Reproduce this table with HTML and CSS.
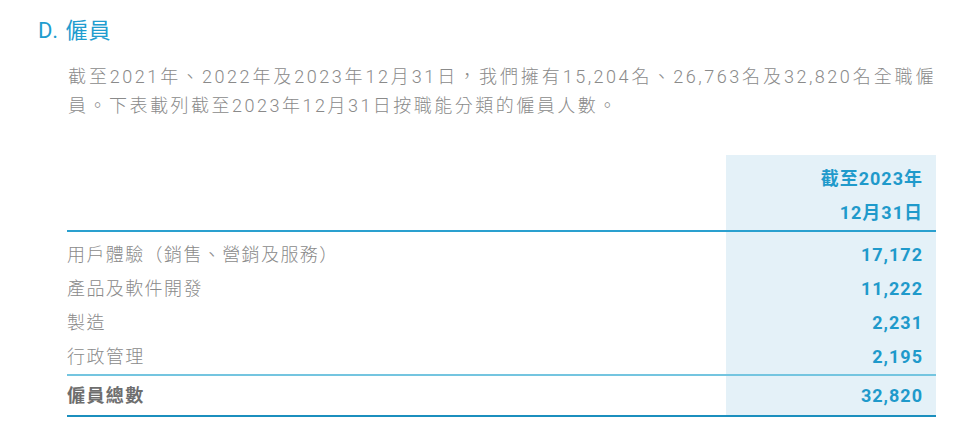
FILE: index.html
```html
<!DOCTYPE html>
<html lang="zh-Hant">
<head>
    <meta charset="UTF-8">
    <title>僱員</title>
    <link rel="stylesheet" href="styles.css">
</head>
<body>
    <h2 class="section-title">D. 僱員</h2>

    <p class="intro">截至2021年、2022年及2023年12月31日，我們擁有15,204名、26,763名及32,820名全職僱員。下表載列截至2023年12月31日按職能分類的僱員人數。</p>

    <table class="staff-table">
        <thead>
            <tr>
                <th class="label-col"></th>
                <th class="value-col">截至2023年<br>12月31日</th>
            </tr>
        </thead>
        <tbody>
            <tr class="first">
                <td>用戶體驗（銷售、營銷及服務）</td>
                <td class="value-col">17,172</td>
            </tr>
            <tr>
                <td>產品及軟件開發</td>
                <td class="value-col">11,222</td>
            </tr>
            <tr>
                <td>製造</td>
                <td class="value-col">2,231</td>
            </tr>
            <tr class="last">
                <td>行政管理</td>
                <td class="value-col">2,195</td>
            </tr>
        </tbody>
        <tfoot>
            <tr>
                <td>僱員總數</td>
                <td class="value-col">32,820</td>
            </tr>
        </tfoot>
    </table>
</body>
</html>
```

FILE: styles.css
```css
body {
    margin: 0;
    padding: 16px 0 0 38px;
    background-color: #fff;
    font-family: Roboto, "Noto Sans CJK TC", sans-serif;
    color: #8a8a8a;
}

.section-title {
    margin: 0;
    font-size: 22px;
    font-weight: 400;
    line-height: 30px;
    color: #1f9dcf;
    letter-spacing: 1px;
}

.intro {
    margin: 16px 0 0 30px;
    width: 868px;
    font-size: 18px;
    font-weight: 300;
    line-height: 29px;
    letter-spacing: 2.5px;
    text-align: justify;
}

.staff-table {
    margin: 35px 0 0 29px;
    width: 869px;
    border-collapse: collapse;
    font-size: 18px;
    letter-spacing: 1.4px;
}

.staff-table th,
.staff-table td {
    padding: 0;
    text-align: left;
    font-weight: 300;
}

.staff-table .value-col {
    width: 197px;
    padding-right: 13px;
    text-align: right;
    background-color: #e4f1f8;
    color: #1f9acb;
    font-weight: 700;
    letter-spacing: 1px;
}

.staff-table thead th {
    padding-top: 7px;
    line-height: 34px;
    border-bottom: 2px solid #2aa0cf;
    font-weight: 500;
}

.staff-table thead .label-col {
    background: none;
}

.staff-table tbody td {
    height: 34px;
    line-height: 34px;
}

.staff-table tbody tr.first td {
    padding-top: 6px;
}

.staff-table tbody tr.last td {
    border-bottom: 2px solid #74c5e0;
}

.staff-table tfoot td {
    height: 39px;
    line-height: 39px;
    border-bottom: 2px solid #1b8fbe;
    font-weight: 700;
    color: #6e6e6e;
}

.staff-table tfoot .value-col {
    color: #1f9acb;
}
```
